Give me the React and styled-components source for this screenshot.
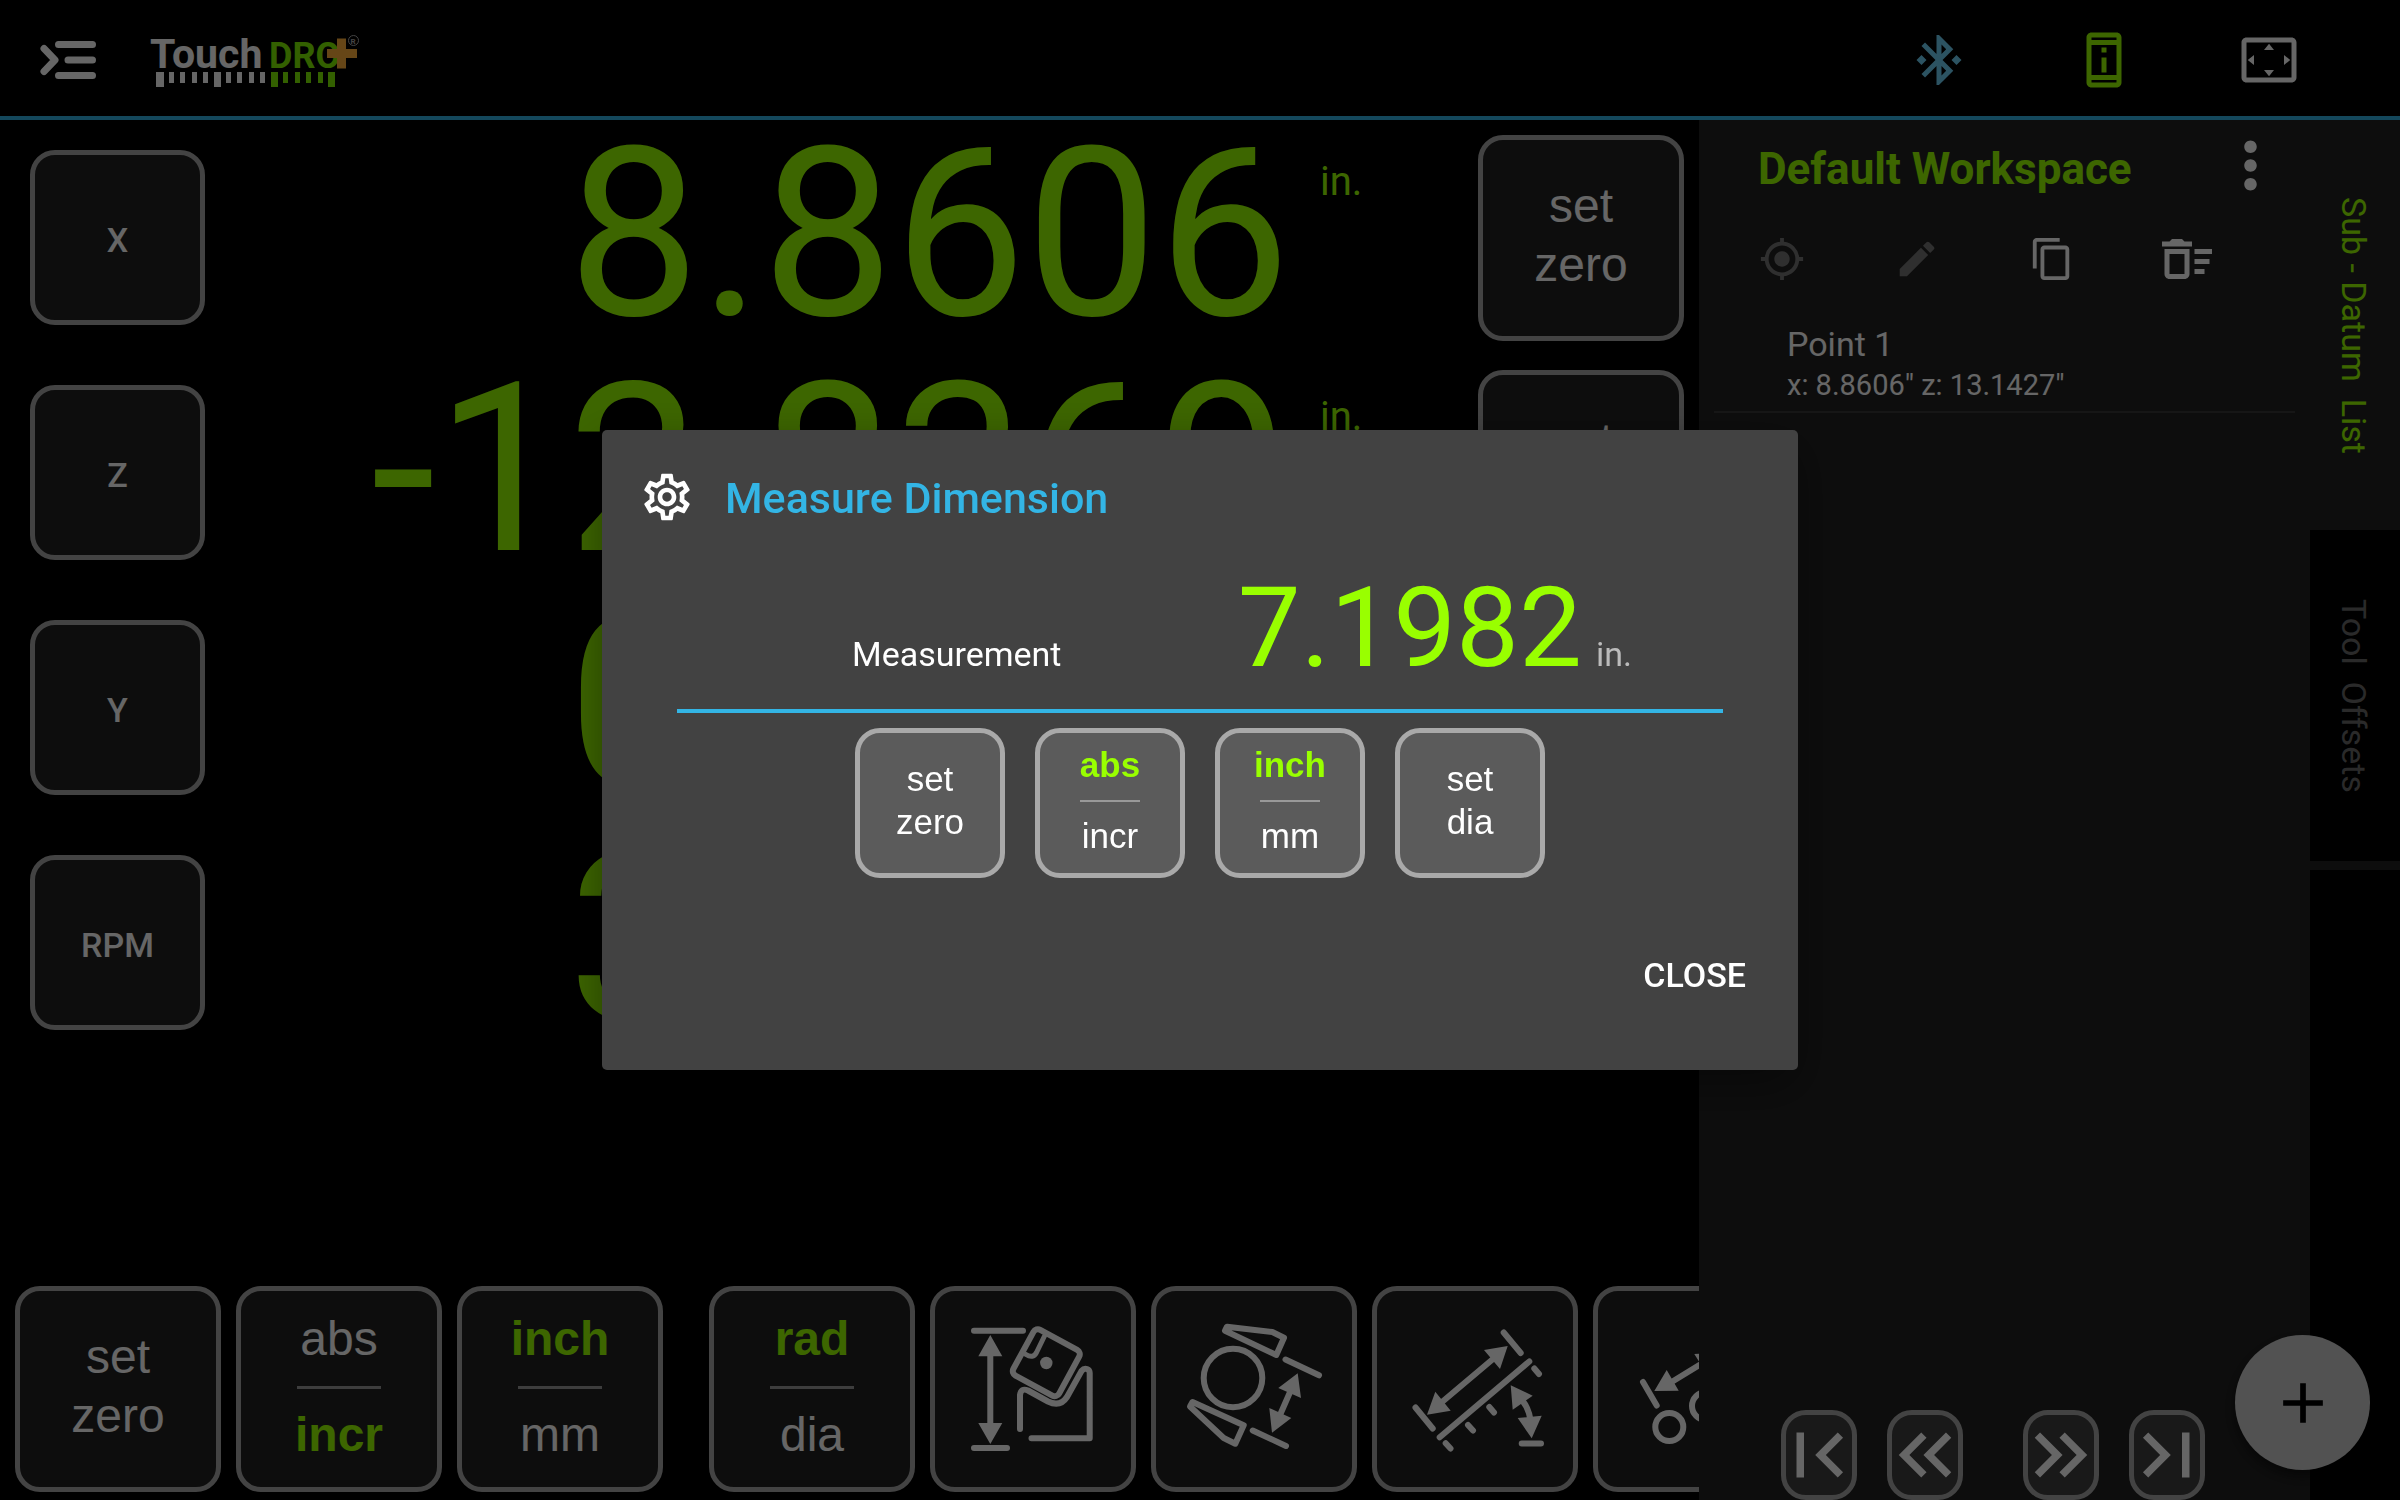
import styled, { createGlobalStyle } from 'styled-components';
import {
    MdBluetoothConnected, MdOutlinePermDeviceInformation, MdSettingsOverscan, MdMoreVert,
    MdGpsFixed, MdEdit, MdContentCopy, MdOutlineDeleteSweep, MdOutlineSettings, MdAdd,
    MdFirstPage, MdLastPage, MdKeyboardDoubleArrowLeft, MdKeyboardDoubleArrowRight
} from 'react-icons/md';

const axes = [
    { name: 'X', value: '8.8606', unit: 'in.' },
    { name: 'Z', value: '-12.8369', unit: 'in.' },
    { name: 'Y', value: '0.0000', unit: 'in.' },
    { name: 'RPM', value: '350.00', unit: '' },
];

const points = [
    { name: 'Point 1', coords: 'x: 8.8606" z: 13.1427"' },
];

const whiteTicks = [
    [156, 8, 15], [169, 5, 11], [180, 5, 11], [192, 5, 11], [203, 5, 11], [214, 7, 15],
    [226, 5, 11], [237, 5, 11], [249, 5, 11], [260, 5, 11],
];
const greenTicks = [
    [271, 7, 15], [283, 5, 11], [295, 5, 11], [306, 5, 11], [318, 5, 11], [328, 7, 15],
];

function MenuIcon() {
    return (
        <svg width="60" height="60" viewBox="0 0 60 60" fill="none" stroke="#fff" strokeWidth="7" strokeLinecap="round" strokeLinejoin="round">
            <path d="M20.500 14.500H54.500M30 30H54.500M20.500 45.500H54.500M6 18.500L17 30L6 41.500" />
        </svg>
    )
}

function Logo() {
    return (
        <svg width="214" height="58" viewBox="148 31 214 58" role="img" aria-label="TouchDRO+">
            <LogoText x="150" y="68" fill="#fff" fontSize="41">Touch</LogoText>
            <LogoText x="269" y="68" fill="#80f000" fontSize="36">DRO</LogoText>
            {whiteTicks.map(([x, w, h]) => <rect key={x} x={x} y="72" width={w} height={h} fill="#fff" />)}
            {greenTicks.map(([x, w, h]) => <rect key={x} x={x} y="72" width={w} height={h} fill="#80f000" />)}
            <path d="M337 38.500h9v10.500h11v9h-11v10.500h-9v-10.500h-10v-9h10z" fill="#ffb03b" />
            <circle cx="353.500" cy="40.500" r="5" fill="none" stroke="#aaa" />
            <LogoText x="350.500" y="43.500" fill="#aaa" fontSize="8">R</LogoText>
        </svg>
    )
}

function BlockIcon() {
    return (
        <Glyph viewBox="5 5 196 196">
            <path d="M44 44.700H93M44 162H77M60.300 66V142" />
            <path className="solid" d="M60.300 49L72.300 70.300H48.300zM60.300 158L72.300 137H48.300z" />
            <rect x="90.300" y="50.700" width="52" height="52" rx="5" transform="rotate(28.500 116.300 76.700)" />
            <path d="M114.500 50L106.500 66.500Q103 73 96 68.500" strokeWidth="5" />
            <circle className="solid" cx="116.300" cy="77" r="6.200" />
            <path d="M90 143V109Q91 101.500 98 104.500L118 115.500Q130 121.500 137 111L151.500 85Q154 82 157 83Q159.700 84 159.700 87V152.300H101.500" />
        </Glyph>
    )
}

function RoundIcon() {
    return (
        <Glyph viewBox="5 5 196 196">
            <circle cx="82" cy="92" r="29.300" />
            <path d="M74 44.700L76 40.700L121.300 46L133 51.700L125.300 69z" />
            <path d="M39 120.500L41.500 116L92.700 139.300L84.300 157.700L72.700 152z" />
            <path d="M134.500 73.500L168 89.300M101.700 144.500L135 160M139.500 105L129 129" />
            <path className="solid" d="M146.700 87.300L127.300 102L150 112zM121 146.700L118.300 122L140.300 132z" />
        </Glyph>
    )
}

function AngleIcon() {
    return (
        <Glyph viewBox="5 5 196 196">
            <path d="M131.700 46.500L148.700 67M43.500 121.500L60.700 142.500M67.700 151.300L157.300 75.500M70 116L121 73" />
            <path d="M162.300 82.500L167 88M117.300 121L122 126.500M96 139L101 144.500M73.700 157.300L78.500 162.500M149.700 157.500H169" />
            <path d="M150 114Q156.500 122 158.300 133" />
            <path className="solid" d="M135.700 60L112 64L128 83zM55 128.700L63.300 105.700L78.700 124.700z" />
            <path className="solid" d="M138.700 99.300L160.700 109.700L140.700 123.700zM159.700 152.300L145.700 132L169.700 129.700z" />
        </Glyph>
    )
}

function HolesIcon() {
    return (
        <Glyph viewBox="5 5 196 196">
            <path d="M50 96L63.700 119.500M77 97L118 72M120 50L134 73" />
            <path className="solid" d="M61.300 105L73.700 84L85.700 104.700zM127 66L101.300 68L114 88z" />
            <circle cx="76.300" cy="141" r="14" />
            <circle cx="113" cy="120" r="14" />
        </Glyph>
    )
}

// two stacked words, the chosen one lit; without `active` it is a plain two line button
function Option({ top, bottom, active, small }) {
    return (
        <Tile $small={small}>
            <Word $small={small} $on={active === top}>{top}</Word>
            {active && <Rule $small={small} />}
            <Word $small={small} $on={active === bottom}>{bottom}</Word>
        </Tile>
    )
}

function App() {
    return (
        <>
            <GlobalStyle />
            <Page>
                <Header>
                    <BarButton aria-label="Menu"><MenuIcon /></BarButton>
                    <Logo />
                    <Status>
                        <StatusButton aria-label="Bluetooth" $color="#6ed0f5"><MdBluetoothConnected /></StatusButton>
                        <StatusButton aria-label="Device" $color="#99ff00"><MdOutlinePermDeviceInformation /></StatusButton>
                        <StatusButton aria-label="Full screen" $color="#fff"><MdSettingsOverscan /></StatusButton>
                    </Status>
                </Header>
                <Body>
                    <Main>
                        {axes.map((axis) => (
                            <Axis key={axis.name}>
                                <AxisButton>{axis.name}</AxisButton>
                                <Digits>{axis.value}</Digits>
                                <Unit>{axis.unit}</Unit>
                                {axis.unit && <Option top="set" bottom="zero" />}
                            </Axis>
                        ))}
                        <Toolbar>
                            <Group>
                                <Option top="set" bottom="zero" />
                                <Option top="abs" bottom="incr" active="incr" />
                                <Option top="inch" bottom="mm" active="inch" />
                            </Group>
                            <Group>
                                <Option top="rad" bottom="dia" active="rad" />
                                <Tile $icon aria-label="Block height"><BlockIcon /></Tile>
                                <Tile $icon aria-label="Diameter"><RoundIcon /></Tile>
                                <Tile $icon aria-label="Angle"><AngleIcon /></Tile>
                                <Tile $icon aria-label="Hole distance"><HolesIcon /></Tile>
                            </Group>
                        </Toolbar>
                    </Main>
                    <Panel>
                        <PanelHead>
                            <h2>Default Workspace</h2>
                            <button aria-label="More"><MdMoreVert /></button>
                        </PanelHead>
                        <Tools>
                            <ToolButton aria-label="Locate" disabled><MdGpsFixed /></ToolButton>
                            <ToolButton aria-label="Edit" disabled><MdEdit /></ToolButton>
                            <ToolButton aria-label="Copy"><MdContentCopy /></ToolButton>
                            <ToolButton aria-label="Delete all" $large><MdOutlineDeleteSweep /></ToolButton>
                        </Tools>
                        <List>
                            {points.map((point) => (
                                <li key={point.name}>
                                    <p className='name'>{point.name}</p>
                                    <p className='coords'>{point.coords}</p>
                                </li>
                            ))}
                        </List>
                        <Pager>
                            <div>
                                <PageButton aria-label="First"><MdFirstPage /></PageButton>
                                <PageButton aria-label="Previous"><MdKeyboardDoubleArrowLeft /></PageButton>
                            </div>
                            <div>
                                <PageButton aria-label="Next"><MdKeyboardDoubleArrowRight /></PageButton>
                                <PageButton aria-label="Last"><MdLastPage /></PageButton>
                            </div>
                        </Pager>
                    </Panel>
                    <Tabs>
                        <Tab $active>{'Sub - Datum  List'}</Tab>
                        <Tab>{'Tool  Offsets'}</Tab>
                    </Tabs>
                </Body>
                <AddButton aria-label="Add"><MdAdd /></AddButton>
            </Page>
            <Scrim>
                <Dialog role="dialog" aria-label="Measure Dimension">
                    <DialogHead>
                        <button aria-label="Settings"><MdOutlineSettings /></button>
                        <h1>Measure Dimension</h1>
                    </DialogHead>
                    <Reading>
                        <span className='label'>Measurement</span>
                        <span className='value'>7.1982</span>
                        <span className='unit'>in.</span>
                    </Reading>
                    <Actions>
                        <Option small top="set" bottom="zero" />
                        <Option small top="abs" bottom="incr" active="abs" />
                        <Option small top="inch" bottom="mm" active="inch" />
                        <Option small top="set" bottom="dia" />
                    </Actions>
                    <Close>CLOSE</Close>
                </Dialog>
            </Scrim>
        </>
    )
}

export default App;

const GlobalStyle = createGlobalStyle`
  * {
    box-sizing: border-box;
    margin: 0;
    padding: 0;
  }
  body {
    background: #000;
    color: #fff;
    font-family: Roboto, sans-serif;
  }
  button {
    flex: none;
    background: none;
    border: none;
    color: inherit;
    font-family: inherit;
    cursor: pointer;
  }
  svg {
    display: block;
    flex: none;
  }
`;
const Page = styled.div`
  position: relative;
  display: flex;
  flex-direction: column;
  min-height: 100vh;
`;
const Header = styled.header`
  display: flex;
  align-items: center;
  height: 120px;
  padding: 4px 49px 0 38px;
  border-bottom: 4px solid #33b5e5;
`;
const BarButton = styled.button`
  margin-right: 50px;
`;
const LogoText = styled.text`
  font-family: Roboto, sans-serif;
  font-weight: bold;
`;
const Status = styled.div`
  display: flex;
  margin-left: auto;
`;
const StatusButton = styled.button`
  display: flex;
  justify-content: center;
  width: 165px;
  font-size: 60px;
  color: ${p => p.$color};
`;
const Body = styled.div`
  flex: 1;
  display: grid;
  grid-template-columns: minmax(0, 1fr) 611px 90px;
`;
const Main = styled.main`
  display: flex;
  flex-direction: column;
  overflow: hidden;
`;
const Axis = styled.div`
  display: grid;
  grid-template-columns: 175px minmax(0, 1fr) 158px 206px;
  align-items: center;
  height: 235px;
  padding: 0 15px 0 30px;
`;
const AxisButton = styled.button`
  width: 175px;
  height: 175px;
  padding-top: 4px;
  border: 5px solid #a9a9a9;
  border-radius: 25px;
  background: rgba(255, 255, 255, 0.135);
  font-size: 34px;
  font-weight: 500;
`;
const Digits = styled.output`
  padding: 0 30px 5px 0;
  color: #99ff00;
  font-size: 235px;
  line-height: 230px;
  text-align: right;
  white-space: nowrap;
`;
const Unit = styled.span`
  align-self: start;
  padding-top: 37px;
  color: #99ff00;
  font-size: 40px;
  line-height: 50px;
`;
const Tile = styled.button`
  display: flex;
  flex-direction: column;
  align-items: center;
  justify-content: center;
  width: ${p => p.$small ? 150 : 206}px;
  height: ${p => p.$small ? 150 : 206}px;
  padding-bottom: ${p => p.$icon ? 0 : 6}px;
  border: 5px solid #a9a9a9;
  border-radius: 25px;
  background: rgba(255, 255, 255, 0.135);
`;
const Word = styled.span`
  color: ${p => p.$on ? '#99ff00' : '#fff'};
  font-family: "Liberation Sans", Arial, sans-serif;
  font-size: ${p => p.$small ? 35 : 48}px;
  font-weight: ${p => p.$on ? 'bold' : 'normal'};
  line-height: ${p => p.$small ? 43 : 59}px;
`;
const Rule = styled.i`
  width: ${p => p.$small ? 60 : 84}px;
  height: ${p => p.$small ? 2 : 3}px;
  margin: ${p => p.$small ? '14px 0 12px' : '18px 0 16px'};
  background: #999;
`;
const Glyph = styled.svg`
  width: 196px;
  height: 196px;
  fill: none;
  stroke: #fff;
  stroke-width: 6px;
  stroke-linecap: round;
  stroke-linejoin: round;
  .solid {
    fill: #fff;
    stroke: none;
  }
`;
const Toolbar = styled.div`
  display: flex;
  gap: 46px;
  margin-top: auto;
  padding: 0 0 8px 15px;
`;
const Group = styled.div`
  display: flex;
  gap: 15px;
`;
const Panel = styled.aside`
  display: flex;
  flex-direction: column;
  padding: 0 15px;
  background: #222;
`;
const PanelHead = styled.div`
  display: flex;
  align-items: center;
  justify-content: space-between;
  height: 92px;
  padding: 0 7px 0 44px;
  h2 {
    padding-top: 6px;
    color: #99ff00;
    font-size: 44px;
    font-weight: 700;
  }
  button {
    padding-bottom: 2px;
    font-size: 75px;
  }
`;
const Tools = styled.div`
  display: flex;
`;
const ToolButton = styled.button`
  display: flex;
  align-items: center;
  justify-content: center;
  width: 135px;
  height: 94px;
  color: #fff;
  font-size: ${p => p.$large ? 60 : 46}px;
  &:disabled {
    color: #777;
  }
`;
const List = styled.ul`
  list-style: none;
  li {
    padding: 16px 0 7px 73px;
    border-bottom: 2px solid #393939;
  }
  .name {
    font-size: 34px;
    line-height: 44px;
  }
  .coords {
    font-size: 29px;
    line-height: 38px;
  }
`;
const Pager = styled.div`
  display: flex;
  gap: 60px;
  margin-top: auto;
  padding-left: 67px;
  div {
    display: flex;
    gap: 30px;
  }
`;
const PageButton = styled.button`
  display: flex;
  align-items: center;
  justify-content: center;
  width: 76px;
  height: 90px;
  border: 5px solid #a9a9a9;
  border-radius: 25px;
  background: rgba(255, 255, 255, 0.135);
  font-size: 90px;
`;
const Tabs = styled.div`
  display: flex;
  flex-direction: column;
`;
const Tab = styled.button`
  height: ${p => p.$active ? 410 : 340}px;
  padding-right: 2px;
  border-bottom: ${p => p.$active ? 'none' : '9px solid #222'};
  background: ${p => p.$active ? '#222' : '#000'};
  color: ${p => p.$active ? '#99ff00' : '#6a6a6a'};
  font-size: 34px;
  white-space: pre;
  writing-mode: vertical-rl;
`;
const AddButton = styled.button`
  position: absolute;
  right: 30px;
  bottom: 30px;
  display: flex;
  align-items: center;
  justify-content: center;
  width: 135px;
  height: 135px;
  border-radius: 50%;
  background: #cdcdcd;
  box-shadow: 0 6px 14px rgba(0, 0, 0, 0.5);
  color: #000;
  font-size: 68px;
`;
const Scrim = styled.div`
  position: fixed;
  inset: 0;
  display: flex;
  align-items: center;
  justify-content: center;
  background: rgba(0, 0, 0, 0.6);
`;
const Dialog = styled.section`
  display: flex;
  flex-direction: column;
  width: 1196px;
  max-width: 90%;
  padding-bottom: 65px;
  border-radius: 5px;
  background: #424242;
  box-shadow: 0 16px 48px rgba(0, 0, 0, 0.4);
`;
const DialogHead = styled.div`
  display: flex;
  align-items: center;
  gap: 30px;
  height: 136px;
  padding-left: 37px;
  button {
    padding-bottom: 2px;
    font-size: 56px;
  }
  h1 {
    color: #33b5e5;
    font-size: 43px;
    font-weight: 500;
  }
`;
const Reading = styled.div`
  display: flex;
  align-items: baseline;
  height: 147px;
  margin: 0 75px;
  padding: 6px 91px 0 175px;
  border-bottom: 4px solid #33b5e5;
  font-size: 34px;
  .label {
    margin-right: auto;
  }
  .value {
    color: #99ff00;
    font-size: 112px;
    line-height: 112px;
  }
  .unit {
    padding-left: 14px;
    color: #bbb;
  }
`;
const Actions = styled.div`
  display: flex;
  justify-content: center;
  gap: 30px;
  padding-top: 15px;
`;
const Close = styled.button`
  align-self: flex-end;
  height: 60px;
  margin: 67px 37px 0;
  padding: 0 15px;
  font-size: 34px;
  font-weight: 500;
`;
